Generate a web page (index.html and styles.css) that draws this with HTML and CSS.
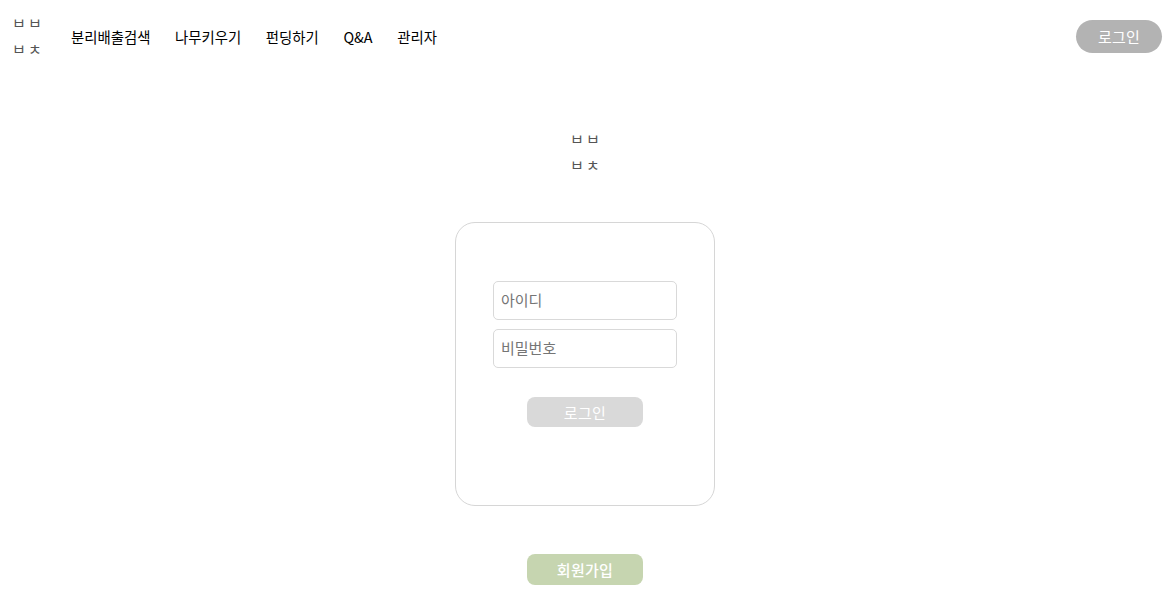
FILE: index.html
```html
<!DOCTYPE html>
<html lang="ko">
<head>
  <meta charset="UTF-8" />
  <meta name="viewport" content="width=device-width, initial-scale=1" />
  <title>로그인</title>
  <link rel="stylesheet" href="styles.css">
</head>
<body>

  <!-- === Header === -->
  <header class="site-header">
    <a href="#" class="logo">
      <span>ㅂ</span><span>ㅂ</span><span>ㅂ</span><span>ㅊ</span>
    </a>
    <nav class="main-nav">
      <a href="#">분리배출검색</a>
      <a href="#">나무키우기</a>
      <a href="#">펀딩하기</a>
      <a href="#">Q&amp;A</a>
      <a href="#">관리자</a>
    </nav>
    <button class="header-login">로그인</button>
  </header>

  <!-- === Login === -->
  <main class="login-page">
    <a href="#" class="logo">
      <span>ㅂ</span><span>ㅂ</span><span>ㅂ</span><span>ㅊ</span>
    </a>
    <form class="login-card">
      <input class="text-input" type="text" placeholder="아이디">
      <input class="text-input" type="password" placeholder="비밀번호">
      <button class="btn btn-login" type="button">로그인</button>
    </form>
    <button class="btn btn-signup" type="button">회원가입</button>
  </main>

</body>
</html>
```

FILE: styles.css
```css
body {
  margin: 0;
  background: #fff;
  color: #000;
  font-family: "Noto Sans CJK KR", "Noto Sans", sans-serif;
}

button {
  border: none;
  font-family: inherit;
  color: #fff;
  cursor: pointer;
}

/* === Logo === */
.logo {
  display: grid;
  grid-template-columns: 16px 16px;
  grid-auto-rows: 26px;
  justify-items: center;
  color: #555;
  font-size: 15px;
  line-height: 24px;
  text-decoration: none;
}

/* === Header === */
.site-header {
  display: flex;
  align-items: center;
  height: 73px;
  padding: 0 11px;
}

.main-nav {
  display: flex;
  gap: 24.6px;
  margin-left: 28px;
}

.main-nav a {
  color: #000;
  font-size: 14.4px;
  text-decoration: none;
}

.header-login {
  width: 86px;
  height: 33px;
  margin-left: auto;
  background: #b3b3b3;
  border-radius: 17px;
  font-size: 15px;
  letter-spacing: 0.2px;
}

/* === Login === */
.login-page {
  display: flex;
  flex-direction: column;
  align-items: center;
  padding: 54px 3px 30px 0;
}

.login-card {
  display: flex;
  flex-direction: column;
  align-items: center;
  box-sizing: border-box;
  width: 260px;
  height: 284px;
  margin-top: 43px;
  padding-top: 58px;
  border: 1px solid #d6d6d6;
  border-radius: 20px;
}

.text-input {
  box-sizing: border-box;
  width: 184px;
  height: 39px;
  margin-bottom: 9px;
  padding: 0 7px 2px;
  border: 1px solid #d9d9d9;
  border-radius: 5px;
  font-family: inherit;
  font-size: 15px;
}

.text-input::placeholder {
  color: #757575;
}

.btn {
  width: 116px;
  border-radius: 8px;
  font-size: 15px;
  letter-spacing: 0.3px;
}

.btn-login {
  height: 30px;
  margin-top: 20px;
  background: #d9d9d9;
}

.btn-signup {
  height: 31px;
  margin-top: 48px;
  background: #c6d5b0;
  font-weight: 500;
}
```
